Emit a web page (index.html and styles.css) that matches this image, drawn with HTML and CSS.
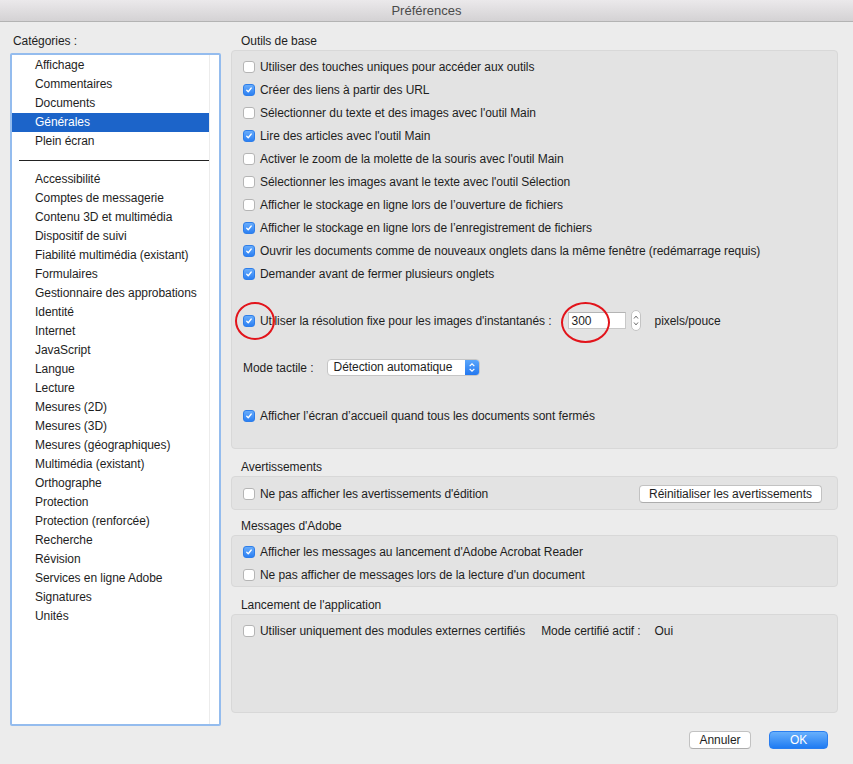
FILE: index.html
```html
<!DOCTYPE html>
<html lang="fr">
<head>
    <meta charset="UTF-8">
    <title>Préférences</title>
    <link rel="stylesheet" href="styles.css">
</head>
<body>
<div class="window">
    <div class="titlebar">Préférences</div>

    <div class="content">
        <div class="sidebar">
            <div class="side-label">Catégories :</div>
            <div class="list">
                <div class="items">
                    <div class="item">Affichage</div>
                    <div class="item">Commentaires</div>
                    <div class="item">Documents</div>
                    <div class="item selected">Générales</div>
                    <div class="item">Plein écran</div>
                    <div class="sep"></div>
                    <div class="item">Accessibilité</div>
                    <div class="item">Comptes de messagerie</div>
                    <div class="item">Contenu 3D et multimédia</div>
                    <div class="item">Dispositif de suivi</div>
                    <div class="item">Fiabilité multimédia (existant)</div>
                    <div class="item">Formulaires</div>
                    <div class="item">Gestionnaire des approbations</div>
                    <div class="item">Identité</div>
                    <div class="item">Internet</div>
                    <div class="item">JavaScript</div>
                    <div class="item">Langue</div>
                    <div class="item">Lecture</div>
                    <div class="item">Mesures (2D)</div>
                    <div class="item">Mesures (3D)</div>
                    <div class="item">Mesures (géographiques)</div>
                    <div class="item">Multimédia (existant)</div>
                    <div class="item">Orthographe</div>
                    <div class="item">Protection</div>
                    <div class="item">Protection (renforcée)</div>
                    <div class="item">Recherche</div>
                    <div class="item">Révision</div>
                    <div class="item">Services en ligne Adobe</div>
                    <div class="item">Signatures</div>
                    <div class="item">Unités</div>
                </div>
                <div class="track"></div>
            </div>
        </div>

        <div class="main">
            <div class="section-title first">Outils de base</div>
            <div class="group group-tools">
                <div class="row"><span class="cb"></span>Utiliser des touches uniques pour accéder aux outils</div>
                <div class="row"><span class="cb on"><svg viewBox="0 0 12 12"><path d="M3.3 6.2 L5.1 8.1 L8.7 3.6"/></svg></span>Créer des liens à partir des URL</div>
                <div class="row"><span class="cb"></span>Sélectionner du texte et des images avec l'outil Main</div>
                <div class="row"><span class="cb on"><svg viewBox="0 0 12 12"><path d="M3.3 6.2 L5.1 8.1 L8.7 3.6"/></svg></span>Lire des articles avec l'outil Main</div>
                <div class="row"><span class="cb"></span>Activer le zoom de la molette de la souris avec l'outil Main</div>
                <div class="row"><span class="cb"></span>Sélectionner les images avant le texte avec l'outil Sélection</div>
                <div class="row"><span class="cb"></span>Afficher le stockage en ligne lors de l’ouverture de fichiers</div>
                <div class="row"><span class="cb on"><svg viewBox="0 0 12 12"><path d="M3.3 6.2 L5.1 8.1 L8.7 3.6"/></svg></span>Afficher le stockage en ligne lors de l’enregistrement de fichiers</div>
                <div class="row"><span class="cb on"><svg viewBox="0 0 12 12"><path d="M3.3 6.2 L5.1 8.1 L8.7 3.6"/></svg></span>Ouvrir les documents comme de nouveaux onglets dans la même fenêtre (redémarrage requis)</div>
                <div class="row"><span class="cb on"><svg viewBox="0 0 12 12"><path d="M3.3 6.2 L5.1 8.1 L8.7 3.6"/></svg></span>Demander avant de fermer plusieurs onglets</div>

                <div class="row row-res">
                    <span class="cb on"><svg viewBox="0 0 12 12"><path d="M3.3 6.2 L5.1 8.1 L8.7 3.6"/></svg></span>Utiliser la résolution fixe pour les images d'instantanés :
                    <span class="num">300</span>
                    <span class="stepper"><svg viewBox="0 0 10 21"><path d="M2.5 8 L5 5 L7.5 8 M2.5 13 L5 16 L7.5 13"/></svg></span>
                    <span class="unit">pixels/pouce</span>
                </div>

                <div class="row row-mode">
                    Mode tactile :
                    <span class="select">
                        <span class="select-text">Détection automatique</span>
                        <span class="select-arrow"><svg viewBox="0 0 14 16"><path d="M4.5 6.5 L7 4 L9.5 6.5 M4.5 9.5 L7 12 L9.5 9.5"/></svg></span>
                    </span>
                </div>

                <div class="row row-home"><span class="cb on"><svg viewBox="0 0 12 12"><path d="M3.3 6.2 L5.1 8.1 L8.7 3.6"/></svg></span>Afficher l’écran d’accueil quand tous les documents sont fermés</div>
            </div>

            <div class="section-title">Avertissements</div>
            <div class="group group-warn">
                <div class="row">
                    <span class="cb"></span>Ne pas afficher les avertissements d'édition
                    <span class="spacer"></span>
                    <span class="btn btn-reset">Réinitialiser les avertissements</span>
                </div>
            </div>

            <div class="section-title tight">Messages d'Adobe</div>
            <div class="group group-msg">
                <div class="row"><span class="cb on"><svg viewBox="0 0 12 12"><path d="M3.3 6.2 L5.1 8.1 L8.7 3.6"/></svg></span>Afficher les messages au lancement d'Adobe Acrobat Reader</div>
                <div class="row"><span class="cb"></span>Ne pas afficher de messages lors de la lecture d'un document</div>
            </div>

            <div class="section-title">Lancement de l'application</div>
            <div class="group group-launch">
                <div class="row">
                    <span class="cb"></span>Utiliser uniquement des modules externes certifiés
                    <span class="cert-label">Mode certifié actif :</span>
                    <span class="cert-value">Oui</span>
                </div>
            </div>
        </div>
    </div>

    <div class="footer">
        <span class="btn btn-cancel">Annuler</span>
        <span class="btn btn-ok">OK</span>
    </div>

    <!-- annotations rouges -->
    <div class="mark mark-cb"></div>
    <div class="mark mark-num"></div>
</div>
</body>
</html>
```

FILE: styles.css
```css
body {
    margin: 0;
    padding: 0;
    font-family: "Liberation Sans", Arial, sans-serif;
    font-size: 12px;
    letter-spacing: -0.06px;
    color: #1e1e1e;
    background-color: #ececec;
}

.window {
    position: relative;
    width: 853px;
    height: 764px;
    background-color: #ececec;
    overflow: hidden;
}

.titlebar {
    height: 21px;
    line-height: 22px;
    text-align: center;
    font-size: 13px;
    letter-spacing: 0;
    color: #4a4a4a;
    background: linear-gradient(#ebe9eb, #d4d2d4);
    border-bottom: 1px solid #b3b3b3;
}

.content {
    display: flex;
    height: 704px;
    padding: 11px 15px 0 10px;
    box-sizing: border-box;
}

/* ---- colonne de gauche ---- */

.sidebar {
    width: 211px;
    display: flex;
    flex-direction: column;
}

.side-label {
    height: 16px;
    line-height: 16px;
    margin-left: 3px;
    margin-bottom: 4px;
}

.list {
    display: flex;
    height: 673px;
    box-sizing: border-box;
    border: 2px solid #94bcee;
    border-radius: 2px;
    background-color: #fff;
}

.items {
    width: 197px;
    padding-top: 1px;
}

.item {
    height: 19px;
    line-height: 19px;
    padding-left: 23px;
}

.item.selected {
    background-color: #1c64c9;
    color: #fff;
}

.sep {
    height: 19px;
    position: relative;
}

.sep::after {
    content: "";
    position: absolute;
    left: 7px;
    right: 0;
    top: 9px;
    height: 1px;
    background-color: #222;
}

.track {
    flex: 1;
    border-left: 1px solid #ececec;
}

/* ---- colonne de droite ---- */

.main {
    width: 607px;
    margin-left: 10px;
}

.section-title {
    height: 16px;
    line-height: 16px;
    margin-top: 10px;
    margin-bottom: 1px;
    padding-left: 10px;
}

.section-title.first {
    margin-top: 0;
}

.section-title.tight {
    margin-top: 8px;
}

.group {
    background-color: #e3e3e3;
    border: 1px solid #d8d8d8;
    border-radius: 4px;
    padding: 4px 15px 0 11px;
}

.group-tools {
    padding-bottom: 21px;
}

.group-warn {
    padding-top: 5px;
    padding-bottom: 4px;
}

.group-launch {
    height: 99px;
    box-sizing: border-box;
}

.row {
    display: flex;
    align-items: center;
    height: 23px;
    white-space: nowrap;
}

.row-res {
    margin-top: 24px;
}

.row-mode {
    margin-top: 24px;
}

.row-home {
    margin-top: 25px;
}

.cb {
    width: 12px;
    height: 12px;
    margin-right: 5px;
    box-sizing: border-box;
    border: 1px solid #b5b5b5;
    border-radius: 3px;
    background-color: #fff;
    flex-shrink: 0;
}

.cb.on {
    border-color: #2e7ee9;
    background: linear-gradient(#68acfb, #2c80f3);
}

.cb svg {
    display: block;
    width: 10px;
    height: 10px;
}

.cb svg path {
    fill: none;
    stroke: #fff;
    stroke-width: 1.6;
    stroke-linecap: round;
    stroke-linejoin: round;
}

.num {
    width: 58px;
    height: 17px;
    line-height: 17px;
    margin-left: 16px;
    padding-left: 3px;
    box-sizing: border-box;
    background-color: #fff;
    border: 1px solid #c8c8c8;
    border-top-color: #b4b4b4;
}

.stepper {
    width: 10px;
    height: 21px;
    margin-left: 5px;
    box-sizing: border-box;
    background-color: #fff;
    border: 1px solid #c4c4c4;
    border-radius: 5px;
}

.stepper svg {
    display: block;
    width: 8px;
    height: 19px;
}

.stepper svg path {
    fill: none;
    stroke: #555;
    stroke-width: 1.1;
}

.unit {
    margin-left: 14px;
}

.select {
    display: flex;
    width: 153px;
    height: 17px;
    margin-left: 13px;
    box-sizing: border-box;
    background-color: #fff;
    border: 1px solid #c6c6c6;
    border-radius: 4px;
    overflow: hidden;
}

.select-text {
    flex: 1;
    line-height: 15px;
    padding-left: 6px;
}

.select-arrow {
    width: 14px;
    background: linear-gradient(#5aa6fb, #2478f0);
}

.select-arrow svg {
    display: block;
    width: 14px;
    height: 15px;
}

.select-arrow svg path {
    fill: none;
    stroke: #fff;
    stroke-width: 1.3;
}

.spacer {
    flex: 1;
}

.btn {
    display: inline-flex;
    align-items: center;
    justify-content: center;
    height: 18px;
    box-sizing: border-box;
    background-color: #fff;
    border: 1px solid #c2c2c2;
    border-bottom-color: #adadad;
    border-radius: 4px;
}

.btn-reset {
    width: 183px;
}

.cert-label {
    margin-left: 16px;
}

.cert-value {
    margin-left: 14px;
}

.footer {
    display: flex;
    justify-content: flex-end;
    gap: 18px;
    padding: 5px 25px 0 0;
}

.btn-cancel {
    width: 62px;
}

.btn-ok {
    width: 59px;
    color: #fff;
    border-color: #2a7ef0;
    background: linear-gradient(#68b0fc, #1f7bf2);
}

.mark {
    position: absolute;
    border: 2.5px solid #e2141b;
    border-radius: 50%;
    box-sizing: border-box;
}

.mark-cb {
    left: 235px;
    top: 302px;
    width: 40px;
    height: 38px;
}

.mark-num {
    left: 561px;
    top: 302px;
    width: 49px;
    height: 41px;
}
```
